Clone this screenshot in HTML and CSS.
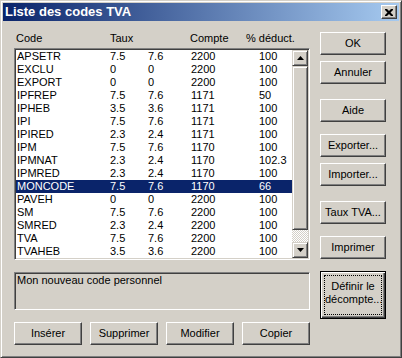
FILE: index.html
```html
<!DOCTYPE html>
<html lang="fr">

<head>
  <meta charset="UTF-8">
  <title>Liste des codes TVA</title>
  <link rel="stylesheet" href="styles.css">
</head>

<body>
  <div class="window">
    <div class="titlebar">
      <span class="title">Liste des codes TVA</span>
      <button type="button" class="close">
        <svg width="8" height="7" viewBox="0 0 8 7"><path d="M0 0h2l2 2 2-2h2v1l-2.5 2.5L8 6v1H6L4 5 2 7H0V6l2.5-2.5L0 1z" fill="#000"/></svg>
      </button>
    </div>

    <div class="content">
      <div class="main">
        <div class="list-head">
          <span>Code</span><span>Taux</span><span>Compte</span><span>% déduct.</span>
        </div>

        <div class="listbox">
          <div class="rows">
            <div class="row"><span>APSETR</span><span>7.5</span><span>7.6</span><span>2200</span><span>100</span></div>
            <div class="row"><span>EXCLU</span><span>0</span><span>0</span><span>2200</span><span>100</span></div>
            <div class="row"><span>EXPORT</span><span>0</span><span>0</span><span>2200</span><span>100</span></div>
            <div class="row"><span>IPFREP</span><span>7.5</span><span>7.6</span><span>1171</span><span>50</span></div>
            <div class="row"><span>IPHEB</span><span>3.5</span><span>3.6</span><span>1171</span><span>100</span></div>
            <div class="row"><span>IPI</span><span>7.5</span><span>7.6</span><span>1171</span><span>100</span></div>
            <div class="row"><span>IPIRED</span><span>2.3</span><span>2.4</span><span>1171</span><span>100</span></div>
            <div class="row"><span>IPM</span><span>7.5</span><span>7.6</span><span>1170</span><span>100</span></div>
            <div class="row"><span>IPMNAT</span><span>2.3</span><span>2.4</span><span>1170</span><span>102.3</span></div>
            <div class="row"><span>IPMRED</span><span>2.3</span><span>2.4</span><span>1170</span><span>100</span></div>
            <div class="row selected"><span>MONCODE</span><span>7.5</span><span>7.6</span><span>1170</span><span>66</span></div>
            <div class="row"><span>PAVEH</span><span>0</span><span>0</span><span>2200</span><span>100</span></div>
            <div class="row"><span>SM</span><span>7.5</span><span>7.6</span><span>2200</span><span>100</span></div>
            <div class="row"><span>SMRED</span><span>2.3</span><span>2.4</span><span>2200</span><span>100</span></div>
            <div class="row"><span>TVA</span><span>7.5</span><span>7.6</span><span>2200</span><span>100</span></div>
            <div class="row"><span>TVAHEB</span><span>3.5</span><span>3.6</span><span>2200</span><span>100</span></div>
          </div>
          <div class="scrollbar">
            <div class="sb-btn">
              <svg width="7" height="4" viewBox="0 0 7 4"><path d="M3.5 0L7 4H0z" fill="#000"/></svg>
            </div>
            <div class="sb-thumb"></div>
            <div class="sb-track"></div>
            <div class="sb-btn">
              <svg width="7" height="4" viewBox="0 0 7 4"><path d="M0 0h7L3.5 4z" fill="#000"/></svg>
            </div>
          </div>
        </div>

        <div class="desc">Mon nouveau code personnel</div>

        <div class="actions">
          <button type="button" class="btn">Insérer</button>
          <button type="button" class="btn">Supprimer</button>
          <button type="button" class="btn">Modifier</button>
          <button type="button" class="btn">Copier</button>
        </div>
      </div>

      <div class="side">
        <button type="button" class="btn">OK</button>
        <button type="button" class="btn near">Annuler</button>
        <button type="button" class="btn far">Aide</button>
        <button type="button" class="btn mid">Exporter...</button>
        <button type="button" class="btn near">Importer...</button>
        <button type="button" class="btn far">Taux TVA...</button>
        <button type="button" class="btn mid">Imprimer</button>
        <button type="button" class="btn default mid"><span class="focus">Définir le<br>décompte...</span></button>
      </div>
    </div>
  </div>
</body>

</html>
```

FILE: styles.css
```css
body {
  margin: 0;
  background: #d4d0c8;
  font-family: 'Liberation Sans', Arial, sans-serif;
  font-size: 11px;
  line-height: 13px;
  color: #000;
}

.window {
  width: 402px;
  height: 358px;
  box-sizing: border-box;
  padding: 2px;
  background: #d4d0c8;
  border: 1px solid;
  border-color: #d4d0c8 #404040 #404040 #d4d0c8;
  box-shadow: inset 1px 1px #fff, inset -1px -1px #808080;
}

.titlebar {
  height: 18px;
  display: flex;
  align-items: center;
  justify-content: space-between;
  padding: 0 2px 0 2px;
  background: linear-gradient(to right, #0a246a, #a6caf0);
}

.title {
  color: #fff;
  font-weight: bold;
  font-size: 13px;
  line-height: 16px;
}

.close {
  width: 16px;
  height: 14px;
  padding: 0;
  display: flex;
  align-items: center;
  justify-content: center;
  background: #d4d0c8;
  border: 1px solid;
  border-color: #fff #404040 #404040 #fff;
  box-shadow: inset -1px -1px #808080;
}

.content {
  display: flex;
  gap: 10px;
  padding: 11px 0 0 11px;
}

.main {
  width: 296px;
}

.list-head {
  display: grid;
  grid-template-columns: 94px 80px 56px 1fr;
  padding-left: 2px;
  height: 13px;
  margin-bottom: 3px;
}

.listbox {
  display: flex;
  height: 212px;
  box-sizing: border-box;
  background: #fff;
  border: 1px solid;
  border-color: #808080 #fff #fff #808080;
  box-shadow: inset 1px 1px #404040, inset -1px -1px #d4d0c8;
  padding: 1px;
}

.rows {
  flex: 1;
}

.row {
  display: grid;
  grid-template-columns: 93px 38px 43px 68px 1fr;
  height: 13px;
  padding-left: 1px;
}

.row.selected {
  background: #0a246a;
  color: #fff;
}

.scrollbar {
  width: 16px;
  display: flex;
  flex-direction: column;
}

.sb-btn,
.sb-thumb {
  box-sizing: border-box;
  background: #d4d0c8;
  border: 1px solid;
  border-color: #d4d0c8 #404040 #404040 #d4d0c8;
  box-shadow: inset 1px 1px #fff, inset -1px -1px #808080;
}

.sb-btn {
  height: 16px;
  display: flex;
  align-items: center;
  justify-content: center;
}

.sb-thumb {
  height: 164px;
}

.sb-track {
  flex: 1;
  background-color: #d4d0c8;
  background-image: conic-gradient(#fff 25%, #d4d0c8 0 50%, #fff 0 75%, #d4d0c8 0);
  background-size: 2px 2px;
}

.desc {
  margin-top: 12px;
  height: 38px;
  box-sizing: border-box;
  padding: 1px 2px;
  border: 1px solid;
  border-color: #808080 #fff #fff #808080;
  box-shadow: inset 1px 1px #404040, inset -1px -1px #d4d0c8;
}

.actions {
  display: flex;
  gap: 8px;
  margin-top: 12px;
}

.actions .btn {
  width: 68px;
}

.btn {
  height: 23px;
  padding: 0;
  box-sizing: border-box;
  font: inherit;
  color: #000;
  background: #d4d0c8;
  border: 1px solid;
  border-color: #fff #404040 #404040 #fff;
  box-shadow: inset -1px -1px #808080;
}

.side {
  width: 66px;
  display: flex;
  flex-direction: column;
}

.side .near {
  margin-top: 6px;
}

.side .mid {
  margin-top: 12px;
}

.side .far {
  margin-top: 15px;
}

.btn.default {
  height: 48px;
  border: 1px solid #000;
  box-shadow: inset 1px 1px #fff, inset -1px -1px #404040, inset -2px -2px #808080;
  padding: 3px;
}

.focus {
  display: block;
  height: 100%;
  box-sizing: border-box;
  padding-top: 4px;
  border: 1px dotted #000;
}
```
